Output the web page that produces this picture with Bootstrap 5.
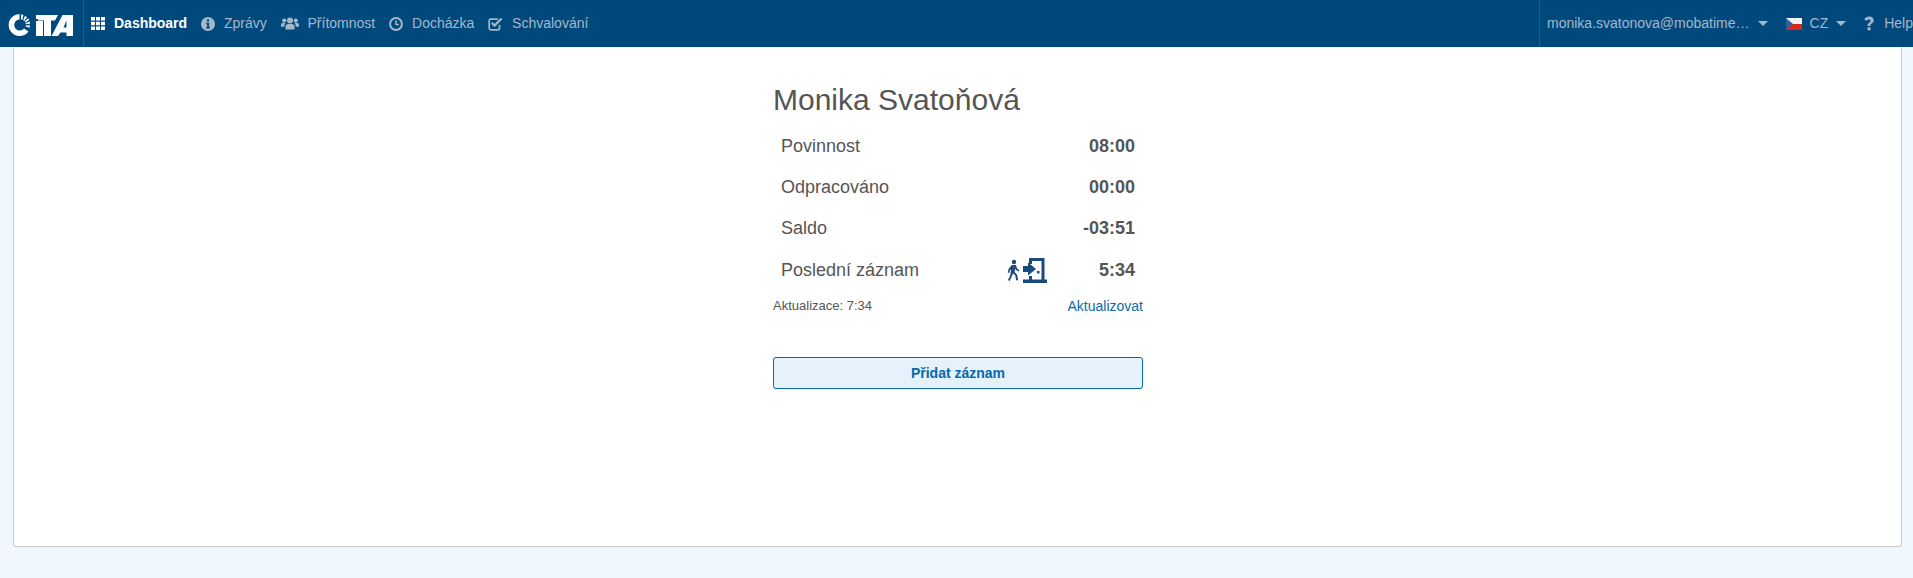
<!DOCTYPE html>
<html lang="cs">
<head>
    <meta charset="UTF-8">
    <meta name="viewport" content="width=device-width, initial-scale=1">
    <title>Dashboard</title>
    <link href="https://cdn.jsdelivr.net/npm/bootstrap@5.3.0/dist/css/bootstrap.min.css" rel="stylesheet">
    <script src="https://cdn.jsdelivr.net/npm/bootstrap@5.3.0/dist/js/bootstrap.bundle.min.js" defer></script>
    <style>
        html, body { height: 578px; overflow: hidden; }
        body { background: #f0f7fd; font-family: "Liberation Sans", Arial, sans-serif; color: #555; }
        .top-bar { height: 47px; background: #00497c; padding: 0; flex-wrap: nowrap; }
        .brand-box { width: 84px; height: 47px; border-right: 1px solid #1d5c96; padding: 14px 0 0 8px; margin: 0; }
        .brand-box svg { display: block; }
        .top-link { display: flex; align-items: center; gap: 9px; font-size: 14px; color: #a5b7cb; text-decoration: none; height: 47px; padding: 0; white-space: nowrap; }
        .top-link.is-on { color: #fff; font-weight: 700; }
        .left-nav { gap: 13.8px; padding-left: 7px; }
        .right-nav { height: 47px; border-left: 1px solid #1d5c96; padding-left: 7px; gap: 18px; margin-left: auto; }
        .right-nav .top-link { gap: 8px; }
        .right-nav .help-link { gap: 10px; }
        .caret-down { width: 0; height: 0; border-left: 5px solid transparent; border-right: 5px solid transparent; border-top: 5px solid #a5b7cb; }
        .page-card { height: 500px; margin: 0 11px 0 13px; border: 1px solid #c8cccf; border-top: 0; border-radius: 0 0 3px 3px; background: #fff; padding-top: 36px; }
        .summary-box { width: 370px; margin-left: 759px; }
        .person-name { font-size: 30px; line-height: 34px; margin: 0 0 8.5px; color: #555; font-weight: 400; }
        .stat-row { height: 41.3px; padding: 0 8px; font-size: 18px; align-items: center; }
        .stat-val { font-weight: 700; }
        .stat-icon { margin-left: auto; margin-right: 52px; display: block; }
        .update-row { font-size: 13px; margin-top: 5px; height: 20px; }
        .update-link { font-size: 14px; color: #0e6aa8; text-decoration: none; position: relative; top: 1px; }
        .add-btn { margin-top: 41.5px; height: 32px; width: 100%; padding: 0; background: #e5f2fb; border: 1px solid #0668ae; border-radius: 3px; color: #0668ae; font-size: 14px; font-weight: 700; }
        .add-btn:hover { background: #d5e9f8; color: #0668ae; border-color: #0668ae; }
    </style>
</head>
<body>
    <nav class="navbar top-bar">
        <div class="navbar-brand brand-box">
            <svg width="66" height="22" viewBox="0 0 66 22" fill="#fff" aria-label="iTA logo">
                <path d="M11.500 0 A11 11 0 1 0 20.500 17.500 L16 14.500 A5.500 5.500 0 1 1 11.500 5.500 Z"/>
                <path d="M13 .2 L15.500 .9 L14.300 5.800 L13 5.400 Z M17 1.700 L19 3.200 L16.200 7 L15.200 6.100 Z M20 4.300 L21.300 6.100 L17.400 8.600 L16.700 7.600 Z M21.800 7.500 L22 9.800 L17.800 10.300 L17.500 9.200 Z M22 11.200 L21.600 13.700 L17.500 12.500 L17.800 11.400 Z"/>
                <rect x="28" y="1" width="6" height="4"/>
                <rect x="28" y="7" width="7" height="15"/>
                <path d="M30 1 H50 L47 6.500 H43 V22 H36 V6.500 H30 Z"/>
                <path d="M54.500 1 H65 V22 H58.500 V18.500 H52.500 L50 22 H43.500 Z M58.500 6.500 L55.500 13.500 H58.500 Z" fill-rule="evenodd"/>
            </svg>
        </div>
        <div class="d-flex left-nav">
            <a class="top-link is-on" href="#">
                <svg width="14" height="13" viewBox="0 0 14 13" fill="#fff"><path d="M0 0h4v3.600H0zM5 0h4v3.600H5zM10 0h4v3.600h-4zM0 4.700h4v3.600H0zM5 4.700h4v3.600H5zM10 4.700h4v3.600h-4zM0 9.400h4V13H0zM5 9.400h4V13H5zM10 9.400h4V13h-4z"/></svg>
                Dashboard
            </a>
            <a class="top-link" href="#">
                <svg width="14" height="14" viewBox="0 0 14 14"><circle cx="7" cy="7" r="7" fill="#a5b7cb"/><rect x="5.900" y="2.400" width="2.200" height="2.200" fill="#00497c"/><path d="M5.200 5.800h2.900v4.300h.9v1.400H5.200v-1.400h.9V7.200h-.9z" fill="#00497c"/></svg>
                Zprávy
            </a>
            <a class="top-link" href="#">
                <svg width="18" height="13" viewBox="0 0 18 13" fill="#a5b7cb"><circle cx="9" cy="3.400" r="3"/><circle cx="3.200" cy="3.600" r="2.100"/><circle cx="14.800" cy="3.600" r="2.100"/><path d="M4.500 12.500V9.200C4.500 7.600 6 7 9 7s4.500.6 4.500 2.200v3.300zM0 9.700V7.500C0 6.400 1 6 3.200 6c.6 0 1 .1 1.300.2C3.600 7 3.300 8 3.300 9.700zM18 9.700V7.500C18 6.400 17 6 14.800 6c-.6 0-1 .1-1.300.2.900.8 1.200 1.800 1.200 3.500z"/></svg>
                Přítomnost
            </a>
            <a class="top-link" href="#">
                <svg width="14" height="14" viewBox="0 0 14 14" fill="none" stroke="#a5b7cb"><circle cx="7" cy="7" r="5.900" stroke-width="2"/><path d="M7 3.500V7.500H10" stroke-width="1.500"/></svg>
                Docházka
            </a>
            <a class="top-link" href="#">
                <svg width="15" height="14" viewBox="0 0 15 14" fill="none" stroke="#a5b7cb"><path d="M11.500 8v3c0 1-.6 1.800-1.600 1.800H2.800C1.800 12.800 1.200 12 1.200 11V3.800c0-1 .6-1.700 1.600-1.700h7" stroke-width="1.700"/><path d="M3.800 5.800L6.500 8.600L13.600 1.500" stroke-width="2.200"/></svg>
                Schvalování
            </a>
        </div>
        <div class="d-flex right-nav">
            <a class="top-link" href="#">
                <span>monika.svatonova@mobatime…</span>
                <span class="caret-down"></span>
            </a>
            <a class="top-link" href="#">
                <svg width="16" height="12" viewBox="0 0 16 12"><rect width="16" height="6" fill="#f1f1f1"/><rect y="6" width="16" height="6" fill="#d7281e"/><path d="M0 0L7 6L0 12Z" fill="#2f5f9e"/></svg>
                <span>CZ</span>
                <span class="caret-down"></span>
            </a>
            <a class="top-link help-link" href="#">
                <svg width="10" height="15" viewBox="0 0 10 15" fill="#a5b7cb"><path d="M3.600 10.100V8.700c0-1.400 3-2.100 3-3.600 0-1-.8-1.500-1.700-1.500-1 0-1.800.5-2.500 1.400L.3 3.300C1.400 1.500 3 .6 5.200.6c2.500 0 4.500 1.400 4.500 4 0 2.800-3.200 3-3.200 4.500v1z"/><rect x="3.500" y="11.300" width="3" height="3"/></svg>
                Help
            </a>
        </div>
    </nav>

    <div class="page-card">
        <div class="summary-box">
            <h1 class="person-name">Monika Svatoňová</h1>
            <div class="d-flex stat-row"><span>Povinnost</span><span class="stat-val ms-auto">08:00</span></div>
            <div class="d-flex stat-row"><span>Odpracováno</span><span class="stat-val ms-auto">00:00</span></div>
            <div class="d-flex stat-row"><span>Saldo</span><span class="stat-val ms-auto">-03:51</span></div>
            <div class="d-flex stat-row">
                <span>Poslední záznam</span>
                <svg class="stat-icon" width="40" height="25" viewBox="0 0 40 25" fill="#1a4a80">
                    <circle cx="7" cy="4" r="2.200"/>
                    <path d="M4.800 7h4l1.500 3.800 2 1.200-.8 1.400-2.800-1.600-.6-1.300-.5 3.500 2.700 3 .8 5.300H9.100l-.8-4.900-2.300-2.200-.9 2.600L2.600 23 .9 22l2.200-4 1-6.500-1.200.8-.6 2.700-1.600-.4.900-3.800z"/>
                    <path d="M22 0h15.500v21.500H40V25H16v-3.500h18.500V3H25v3h-3zM22 18h3v4h-3z"/>
                    <path d="M16 8h5V4.500l8 6.500-8 6.500V14h-5z"/>
                    <path d="M30 13h2.500v2.500H30z"/>
                </svg>
                <span class="stat-val">5:34</span>
            </div>
            <div class="d-flex justify-content-between align-items-center update-row">
                <span>Aktualizace: 7:34</span>
                <a class="update-link" href="#">Aktualizovat</a>
            </div>
            <button type="button" class="btn add-btn">Přidat záznam</button>
        </div>
    </div>
</body>
</html>
